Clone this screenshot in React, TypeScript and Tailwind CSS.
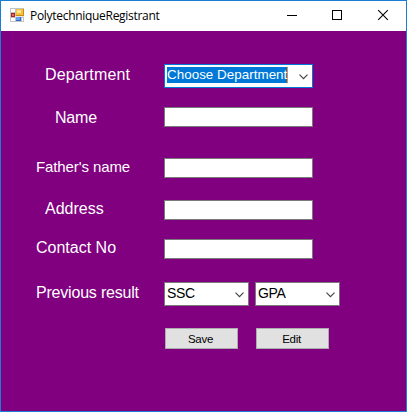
import type { ReactNode } from 'react';

const Chevron = () => (
  <svg className="mr-[4px] mt-px shrink-0" width="9" height="6" viewBox="0 0 9 6" fill="none" stroke="#444" strokeWidth="1.15">
    <path d="M0.5 0.7 L4.5 4.7 L8.5 0.7" />
  </svg>
);

const FormIcon = () => (
  <svg className="mt-[7px] ml-[9px] shrink-0" width="14" height="14" viewBox="0 0 14 14" shapeRendering="crispEdges">
    <rect width="14" height="14" fill="#c3c3c3" />
    <path d="M1 1h4v3H1zM1 10h4v3H1zM12 10h1v3h-1z" fill="#fff" />
    <rect x="1" y="5" width="4" height="4" fill="#a8231c" />
    <rect x="2" y="6" width="2" height="2" fill="#e0705c" />
    <rect x="6" y="1" width="8" height="7" fill="#c98d14" />
    <rect x="6" y="1" width="7" height="6" fill="#f5c03c" />
    <rect x="7" y="2" width="4" height="3" fill="#ffe592" />
    <rect x="5" y="8" width="9" height="1" fill="#e8e8e8" />
    <rect x="6" y="9" width="5" height="4" fill="#3568c8" />
    <rect x="6" y="9" width="4" height="3" fill="#659ff0" />
  </svg>
);

type RowProps = { label: string; labelClass: string; rowClass: string; children: ReactNode };

const Row = ({ label, labelClass, rowClass, children }: RowProps) => (
  <div className={`flex ${rowClass}`}>
    <div className={`w-[163px] shrink-0 whitespace-nowrap leading-[18px] text-white ${labelClass}`}>{label}</div>
    {children}
  </div>
);

const Field = () => <div className="h-5 w-[149px] border border-[#7a7a7a] bg-white" />;

const Combo = ({ value }: { value: string }) => (
  <div className="flex h-6 w-[85px] items-center justify-between border border-[#7a7a7a] bg-white text-[14px] leading-4 tracking-[-0.35px] text-black">
    <span className="ml-[2px] -mt-[2px]">{value}</span>
    <Chevron />
  </div>
);

const Button = ({ text }: { text: string }) => (
  <button className="h-[21px] w-[73px] border border-[#adadad] bg-[#e1e1e1] pr-[2px] text-center text-[11.5px] leading-[20px] tracking-[-0.3px] text-black">
    {text}
  </button>
);

export default function App() {
  return (
    <div className="flex h-[412px] w-[407px] flex-col overflow-hidden border border-[#1a7fd4] bg-[#800080] font-['Liberation_Sans',Arial,sans-serif]">
      <div className="flex h-[30px] shrink-0 bg-white">
        <FormIcon />
        <span className="ml-[6px] mt-[6px] w-[250px] whitespace-nowrap font-['Open_Sans','Noto_Sans',sans-serif] text-[12px] leading-[18px] tracking-[-0.3px] text-black">
          PolytechniqueRegistrant
        </span>
        <svg className="ml-[6px] mt-[8px] shrink-0" width="103" height="12" viewBox="0 0 103 12" fill="none" stroke="#000">
          <path d="M1 6.5h10" shapeRendering="crispEdges" />
          <rect x="46.5" y="1.5" width="9" height="9" shapeRendering="crispEdges" />
          <path d="M92.2 1.2l9.6 9.6M101.800 1.2l-9.6 9.6" strokeWidth="1.1" />
        </svg>
      </div>
      <Row label="Department" rowClass="mt-[33px]" labelClass="pl-[44px] pt-[2px] text-[16px] tracking-[0.15px]">
        <div className="flex h-6 w-[149px] items-center justify-between border border-[#0078d7] bg-white">
          <span className="ml-[2px] -mt-[2px] h-4 w-[121px] whitespace-nowrap border-r border-[#ff8728] bg-[#0078d7] text-[13.4px] leading-4 tracking-[0.03px] text-white">
            Choose Department
          </span>
          <Chevron />
        </div>
      </Row>
      <Row label="Name" rowClass="mt-[19px]" labelClass="pl-[54px] pt-[2px] text-[16px] tracking-[-0.2px]">
        <Field />
      </Row>
      <Row label="Father's name" rowClass="mt-[31px]" labelClass="pl-[35px] text-[15px] tracking-[-0.1px]">
        <Field />
      </Row>
      <Row label="Address" rowClass="mt-[22px]" labelClass="pl-[44px] text-[16px]">
        <Field />
      </Row>
      <Row label="Contact No" rowClass="mt-[19px]" labelClass="pl-[35px] text-[16px]">
        <Field />
      </Row>
      <Row label="Previous result" rowClass="mt-[23px]" labelClass="pl-[35px] pt-[2px] text-[16px] tracking-[-0.2px]">
        <div className="flex gap-[6px]">
          <Combo value="SSC" />
          <Combo value="GPA" />
        </div>
      </Row>
      <div className="ml-[164px] mt-[22px] flex gap-[18px]">
        <Button text="Save" />
        <Button text="Edit" />
      </div>
    </div>
  );
}
